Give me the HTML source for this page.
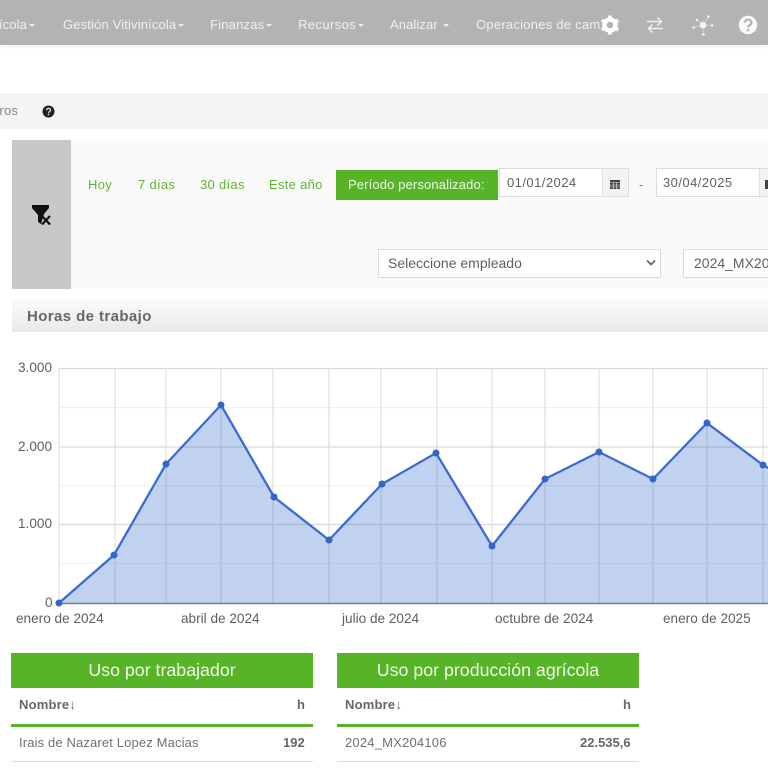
<!DOCTYPE html>
<html lang="es"><head><meta charset="utf-8"><title>Horas de trabajo</title>
<style>
html,body{margin:0;padding:0;background:#fff}
body{width:768px;height:768px;overflow:hidden;position:relative;font-family:"Liberation Sans",sans-serif;color:#666}
#w{position:absolute;left:0;top:0;width:768px;height:768px;overflow:hidden;filter:blur(.35px)}
.a{position:absolute}
.t{position:absolute;white-space:nowrap;line-height:16px}
.n{color:#f0f0ee;font-size:13px;letter-spacing:.1px;top:17px}
.c{display:inline-block;width:0;height:0;border:3px solid transparent;border-top-color:#eee;border-bottom:0;vertical-align:middle;margin-left:2px}
.g{color:#5cb531;font-size:13px;top:177px;letter-spacing:.3px}
.i{position:absolute;background:#fff;border:1px solid #dcdcdc;box-sizing:border-box;height:29px}
.l{font-size:13px;color:#5f5f5f;letter-spacing:.45px}
.h{position:absolute;background:#57b429;color:#f2f8ea;text-align:center;font-size:17.8px;height:35px;line-height:35px;top:653px}
.b{font-weight:bold;font-size:13px;color:#66666b}
.ax{font-size:13.6px;color:#5f5f5f;line-height:16px}
.d{font-size:13px;color:#707070}
</style></head><body><div id="w">
<div class="a" style="left:0;top:0;width:768px;height:45px;background:#b5b3b2;box-shadow:0 2px 4px rgba(0,0,0,.06)"></div>
<span class="t n" style="left:-1px">ícola<i class="c"></i></span>
<span class="t n" style="left:63px;letter-spacing:.15px">Gestión Vitivinícola<i class="c"></i></span>
<span class="t n" style="left:210px;letter-spacing:.2px">Finanzas<i class="c"></i></span>
<span class="t n" style="left:298px;letter-spacing:.4px">Recursos<i class="c"></i></span>
<span class="t n" style="left:390px">Analizar <i class="c"></i></span>
<span class="t n" style="left:476px;width:125px;overflow:hidden;letter-spacing:.25px">Operaciones de campo</span>
<svg class="a" style="left:598px;top:13px" width="24" height="24" viewBox="0 0 24 24"><circle cx="12" cy="12" r="5.500" fill="none" stroke="#fff" stroke-width="4.400"/><path d="M12 2.500v4M12 17.500v4M3.800 7.200l3.500 2M16.700 14.800l3.500 2M3.800 16.800l3.500-2M16.700 9.200l3.500-2" stroke="#fff" stroke-width="3.600"/></svg>
<svg class="a" style="left:644px;top:13px" width="22" height="24" viewBox="0 0 22 24" fill="none" stroke="#efefee" stroke-width="1.500"><path d="M3 8.500h14M13.500 4.500l4 4-4 4M19 15.500H5M8.500 11.500l-4 4 4 4"/></svg>
<svg class="a" style="left:690px;top:12px" width="26" height="26" viewBox="0 0 26 26" fill="#f4f4f3"><path d="M13 13L7 8M13 13L18.500 4.500M13 13L3.500 15.500M13 13L22 13.500M13 13L13.500 22.500" stroke="#e2e2e1" stroke-width=".6"/><circle cx="13" cy="13" r="3.400"/><circle cx="7" cy="8" r="1.200"/><circle cx="18.500" cy="4.500" r="1.300"/><circle cx="3.500" cy="15.500" r="1.300"/><circle cx="22" cy="13.500" r="1.300"/><circle cx="13.500" cy="22.500" r="1.300"/></svg>
<svg class="a" style="left:738px;top:15px" width="20" height="20" viewBox="0 0 20 20"><circle cx="10" cy="10" r="9.200" fill="#fafafa"/><path d="M6.800 7.800c0-4.300 6.600-4.300 6.600-.2 0 2.600-3.300 2.500-3.300 4.800" fill="none" stroke="#b5b3b2" stroke-width="2.200"/><rect x="8.900" y="13.800" width="2.400" height="2.400" fill="#b5b3b2"/></svg>

<div class="a" style="left:0;top:93px;width:768px;height:36px;background:#f4f4f4"></div>
<span class="t" style="left:-8px;top:103px;font-size:13px;color:#888;letter-spacing:.2px">eros</span>
<svg class="a" style="left:42px;top:105px" width="13" height="13" viewBox="0 0 13 13"><circle cx="6.500" cy="6.500" r="6" fill="#222"/><path d="M4.700 5.200c0-2.400 3.800-2.400 3.800-.1 0 1.500-2 1.500-2 2.800" fill="none" stroke="#eee" stroke-width="1.200"/><rect x="5.800" y="8.700" width="1.400" height="1.400" fill="#eee"/></svg>

<div class="a" style="left:12px;top:140px;width:756px;height:149px;background:#fafafa"></div>
<div class="a" style="left:12px;top:140px;width:59px;height:149px;background:#c8c8c8"></div>
<svg class="a" style="left:30px;top:203px" width="24" height="24" viewBox="30 203 24 24"><path d="M32 205H49V208L44 214L41 224L38 222V215L32 208Z" fill="#111"/><path d="M42 216l8 8.500M50 216l-8 8.500" stroke="#111" stroke-width="2.200"/></svg>
<span class="t g" style="left:88px">Hoy</span>
<span class="t g" style="left:138px">7 días</span>
<span class="t g" style="left:200px">30 días</span>
<span class="t g" style="left:269px">Este año</span>
<div class="a" style="left:336px;top:170px;width:162px;height:30px;background:#57b429"></div>
<span class="t" style="left:348px;top:177px;font-size:13px;color:#f1f8e6;letter-spacing:.13px">Período personalizado:</span>
<div class="i" style="left:499px;top:168px;width:130px"></div>
<div class="a" style="left:602px;top:169px;width:26px;height:27px;background:#f3f3f3;border-left:1px solid #e2e2e2;box-sizing:border-box"></div>
<span class="t l" style="left:507px;top:175px">01/01/2024</span>
<svg class="a" style="left:610px;top:179px" width="10" height="10" viewBox="0 0 10 10"><path d="M0 1h10v9H0z" fill="#444"/><path d="M0 3.500h10M3.300 3.500V10M6.600 3.500V10M0 6h10M0 8h10" stroke="#eee" stroke-width=".6"/></svg>
<span class="t" style="left:639px;top:177px;font-size:13px;color:#888">-</span>
<div class="i" style="left:656px;top:168px;width:130px"></div>
<div class="a" style="left:759px;top:169px;width:26px;height:27px;background:#f3f3f3;border-left:1px solid #e2e2e2;box-sizing:border-box"></div>
<span class="t l" style="left:663px;top:175px">30/04/2025</span>
<svg class="a" style="left:765px;top:179px" width="10" height="10" viewBox="0 0 10 10"><path d="M0 1h10v9H0z" fill="#444"/></svg>
<div class="i" style="left:378px;top:249px;width:283px"></div>
<span class="t l" style="left:388px;top:255px;font-size:14px;letter-spacing:0">Seleccione empleado</span>
<svg class="a" style="left:645px;top:258px" width="12" height="10" viewBox="0 0 12 10"><path d="M2 2.500L6 6.500l4-4" fill="none" stroke="#666" stroke-width="1.800"/></svg>
<div class="i" style="left:683px;top:249px;width:120px"></div>
<span class="t l" style="left:694px;top:255px;font-size:14px;letter-spacing:0">2024_MX204106</span>

<div class="a" style="left:12px;top:300px;width:756px;height:32px;background:linear-gradient(#fafafa,#e9e9e9)"></div>
<span class="t" style="left:27px;top:309px;font-size:15px;font-weight:bold;color:#666;letter-spacing:.4px">Horas de trabajo</span>

<svg class="a" style="left:0;top:350px" width="768" height="270" viewBox="0 350 768 270">
<g stroke="#f0f0f0" stroke-width="1.200"><path d="M59 407.500H768M59 486H768M59 563.500H768"/></g>
<g stroke="#d9d9d9" stroke-width="1.200"><path d="M59 368.500H768M59 447H768M59 524.500H768"/></g>
<g stroke="#dedede" stroke-width="1.200"><path d="M59 368V603M115 368V603M166 368V603M221 368V603M273 368V603M329 368V603M381 368V603M437 368V603M492 368V603M545 368V603M599 368V603M653 368V603M707 368V603M763 368V603"/></g>
<path d="M59 603L114 555L166 464L221 405L274 497L329 540L382 484L436 453L492 546L545 479L599 452L653 479L707 423L763 465L790 480V603H59Z" fill="#3366cc" fill-opacity=".3"/>
<path d="M59 603.500H768" stroke="#7d7d88" stroke-width="1.500"/>
<path d="M59 603L114 555L166 464L221 405L274 497L329 540L382 484L436 453L492 546L545 479L599 452L653 479L707 423L763 465L790 480" fill="none" stroke="#3b6bd2" stroke-width="2.300"/>
<g fill="#3366cc"><circle cx="59" cy="603" r="3.500"/><circle cx="114" cy="555" r="3.500"/><circle cx="166" cy="464" r="3.500"/><circle cx="221" cy="405" r="3.500"/><circle cx="274" cy="497" r="3.500"/><circle cx="329" cy="540" r="3.500"/><circle cx="382" cy="484" r="3.500"/><circle cx="436" cy="453" r="3.500"/><circle cx="492" cy="546" r="3.500"/><circle cx="545" cy="479" r="3.500"/><circle cx="599" cy="452" r="3.500"/><circle cx="653" cy="479" r="3.500"/><circle cx="707" cy="423" r="3.500"/><circle cx="763" cy="465" r="3.500"/></g>
</svg>
<span class="t ax" style="left:18px;top:360px">3.000</span>
<span class="t ax" style="left:18px;top:439px">2.000</span>
<span class="t ax" style="left:18px;top:516px">1.000</span>
<span class="t ax" style="left:45px;top:595px">0</span>
<span class="t ax" style="left:16px;top:611px">enero de 2024</span>
<span class="t ax" style="left:181px;top:611px">abril de 2024</span>
<span class="t ax" style="left:342px;top:611px">julio de 2024</span>
<span class="t ax" style="left:495px;top:611px">octubre de 2024</span>
<span class="t ax" style="left:663px;top:611px">enero de 2025</span>

<div class="h" style="left:11px;width:302px">Uso por trabajador</div>
<span class="t b" style="left:19px;top:697px;letter-spacing:.2px">Nombre↓</span>
<span class="t b" style="left:297px;top:697px">h</span>
<div class="a" style="left:11px;top:724px;width:302px;height:3px;background:#57b429"></div>
<span class="t d" style="left:19px;top:735px;letter-spacing:.14px">Irais de Nazaret Lopez Macias</span>
<span class="t b" style="left:283px;top:735px">192</span>
<div class="a" style="left:11px;top:761px;width:302px;height:1px;background:#ddd"></div>

<div class="h" style="left:337px;width:302px">Uso por producción agrícola</div>
<span class="t b" style="left:345px;top:697px;letter-spacing:.2px">Nombre↓</span>
<span class="t b" style="left:623px;top:697px">h</span>
<div class="a" style="left:337px;top:724px;width:302px;height:3px;background:#57b429"></div>
<span class="t d" style="left:345px;top:735px;letter-spacing:.2px">2024_MX204106</span>
<span class="t b" style="left:580px;top:735px">22.535,6</span>
<div class="a" style="left:337px;top:761px;width:302px;height:1px;background:#ddd"></div>
</div></body></html>
